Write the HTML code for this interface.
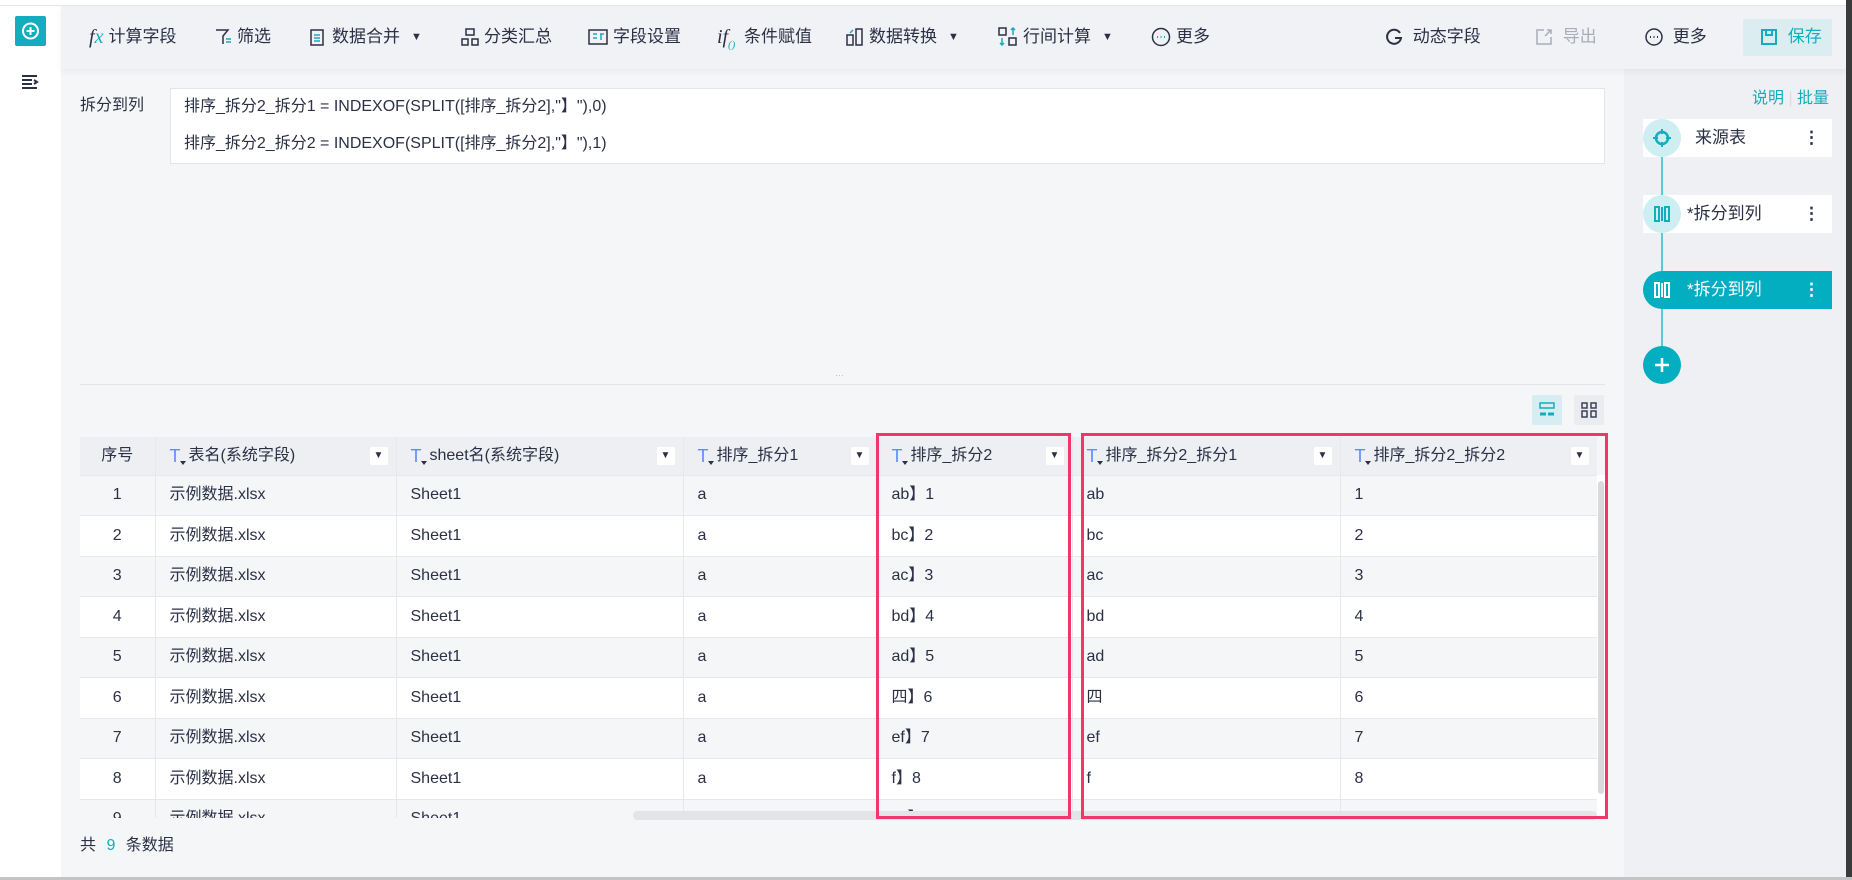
<!DOCTYPE html>
<html><head><meta charset="utf-8">
<style>
*{box-sizing:border-box;margin:0;padding:0}
body{width:1852px;height:880px;overflow:hidden;background:#fff;font-family:"Liberation Sans","Noto Sans CJK SC",sans-serif;color:#2b3045;position:relative}
.abs{position:absolute}
#side{left:0;top:5px;width:61px;height:872px;background:#fff;border-top:1px solid #e3e5ea}
#main{left:61px;top:5px;width:1563px;height:872px;background:#f5f6f8;border-top:1px solid #e3e5ea}
#rp{left:1624px;top:5px;width:222px;height:872px;background:#eff0f3;border-top:1px solid #e3e5ea}
#tb{left:61px;top:6px;width:1785px;height:63px;background:#f1f2f6;box-shadow:0 3px 6px rgba(0,0,0,.05)}
.ti{position:absolute;top:26px;height:22px;font-size:17px;line-height:22px;white-space:nowrap;color:#2b3045;display:flex;align-items:center;gap:5px}
.ti svg{flex:none}
.tri{font-size:11px;margin-left:6px}
#fbox{left:170px;top:88px;width:1435px;height:76px;background:#fff;border:1px solid #e3e5ea;font-size:16px;line-height:20px}
table{border-collapse:collapse;table-layout:fixed;font-size:16px;line-height:20px}
td,th{height:40.5px;border-right:1px solid #e6e8ee;border-bottom:1px solid #e6e8ee;padding:0 0 0 14px;text-align:left;font-weight:normal;white-space:nowrap;overflow:hidden;vertical-align:middle}
td span.v,th span.v{display:inline-block;vertical-align:middle;line-height:20px;height:20px}
th{height:38px;background:#edeff3;position:relative}
td:first-child,th:first-child{text-align:center;padding-left:0}
tr:nth-child(odd) td{background:#f5f6f8}
tr:nth-child(even) td{background:#fff}
.T{color:#5b8ff9;font-size:18px;position:relative;margin-right:8px;display:inline-block;vertical-align:middle;line-height:20px}
.T:after{content:"";position:absolute;left:10px;top:15px;border:3px solid transparent;border-top:4px solid #2b3045}
.dd{position:absolute;right:8px;top:10px;width:18px;height:18px;background:#fff;border-radius:2px;font-size:10px;text-align:center;line-height:18px}
.node{position:absolute;left:1643px;width:189px;height:38px;background:#fff;font-size:17px;line-height:38px}
.circ{position:absolute;left:0;top:0;width:38px;height:38px;border-radius:50%;background:#cfeef2}
.dots{position:absolute;right:12px;top:0;font-weight:bold}
</style></head><body>
<div class="abs" id="side"></div>
<div class="abs" id="main"></div>
<div class="abs" id="rp"></div>
<div class="abs" id="tb"></div>

<div class="abs" style="left:15px;top:16px;width:31px;height:30px;background:#13adbd;border-radius:2px"></div>
<svg class="abs" style="left:20px;top:21px" width="21" height="20"><circle cx="10.5" cy="10" r="7.5" fill="none" stroke="#fff" stroke-width="2"/><path d="M10.5 6v8M6.5 10h8" stroke="#fff" stroke-width="2"/></svg>
<svg class="abs" style="left:21px;top:74px" width="18" height="16"><path d="M1 2h15M1 6h10M1 10h10M1 14h15M13 6l3 2-3 2" stroke="#2b3045" stroke-width="2" fill="none"/></svg>

<div class="ti" style="left:89px"><span style="font-family:'Liberation Serif',serif;font-style:italic;font-size:20px">f<span style="color:#13adbd">x</span></span>计算字段</div>
<div class="ti" style="left:214px"><svg width="18" height="18"><path d="M2 2h12l-5 6v8" stroke="#2b3045" stroke-width="1.5" fill="none"/><path d="M12 11h5M12 14h5" stroke="#13adbd" stroke-width="1.5"/></svg>筛选</div>
<div class="ti" style="left:309px"><svg width="18" height="20"><rect x="2" y="3" width="12" height="15" fill="none" stroke="#2b3045" stroke-width="1.5"/><path d="M5 8h6M5 11h6M5 14h6" stroke="#13adbd" stroke-width="1.5"/></svg>数据合并<span class="tri">▼</span></div>
<div class="ti" style="left:461px"><svg width="18" height="18"><rect x="5" y="1" width="8" height="6" fill="none" stroke="#2b3045" stroke-width="1.5"/><rect x="1" y="11" width="6" height="6" fill="none" stroke="#2b3045" stroke-width="1.5"/><rect x="11" y="11" width="6" height="6" fill="none" stroke="#2b3045" stroke-width="1.5"/></svg>分类汇总</div>
<div class="ti" style="left:588px"><svg width="20" height="18"><rect x="1" y="2" width="18" height="14" fill="none" stroke="#2b3045" stroke-width="1.5"/><path d="M5 6h4M5 10h4M12 6h4M13 6v6" stroke="#13adbd" stroke-width="1.5"/></svg>字段设置</div>
<div class="ti" style="left:717px"><span style="font-family:'Liberation Serif',serif;font-style:italic;font-size:20px;position:relative;width:22px">if<span style="color:#13adbd;font-size:11px;position:absolute;left:11px;top:8px">()</span></span>条件赋值</div>
<div class="ti" style="left:846px"><svg width="18" height="20"><rect x="1" y="8" width="6" height="10" fill="none" stroke="#2b3045" stroke-width="1.5"/><rect x="10" y="2" width="6" height="16" fill="none" stroke="#2b3045" stroke-width="1.5"/><path d="M4 6l3-3" stroke="#13adbd" stroke-width="1.5"/></svg>数据转换<span class="tri">▼</span></div>
<div class="ti" style="left:998px"><svg width="20" height="20"><rect x="1" y="1" width="7" height="7" fill="none" stroke="#2b3045" stroke-width="1.5"/><rect x="11" y="11" width="7" height="7" fill="none" stroke="#2b3045" stroke-width="1.5"/><path d="M4 11v7M2 16l2 2 2-2M15 1v7M13 3l2-2 2 2" stroke="#13adbd" stroke-width="1.5" fill="none"/></svg>行间计算<span class="tri">▼</span></div>
<div class="ti" style="left:1151px"><svg width="20" height="20"><circle cx="10" cy="10" r="8.5" fill="none" stroke="#2b3045" stroke-width="1.5"/><path d="M6 10h1M9.5 10h1M13 10h1" stroke="#13adbd" stroke-width="2"/></svg>更多</div>
<div class="ti" style="left:1385px"><svg width="18" height="18"><path d="M15 5A7 7 0 1 0 16 10H10" stroke="#2b3045" stroke-width="2" fill="none"/></svg>&nbsp;动态字段</div>
<div class="ti" style="left:1535px;color:#a9adb8"><svg width="18" height="18"><path d="M9 2H2v14h14V9M10 8l6-6M12 2h4v4" stroke="#a9adb8" stroke-width="1.5" fill="none"/></svg>&nbsp;导出</div>
<div class="ti" style="left:1645px"><svg width="18" height="18"><circle cx="9" cy="9" r="8" fill="none" stroke="#2b3045" stroke-width="1.5"/><path d="M5 9h1M8.5 9h1M12 9h1" stroke="#2b3045" stroke-width="2"/></svg>&nbsp;更多</div>
<div class="abs" style="left:1743px;top:19px;width:89px;height:37px;background:#dcedf1;border-radius:2px"></div>
<div class="ti" style="left:1760px;color:#13adbd"><svg width="18" height="18"><path d="M2 2h14v14H2zM6 2v5h6V2" stroke="#13adbd" stroke-width="2" fill="none"/></svg>&nbsp;保存</div>

<div class="abs" style="left:80px;top:96px;font-size:16px;line-height:20px">拆分到列</div>
<div class="abs" id="fbox">
<div class="abs" style="left:13px;top:8px">排序_拆分2_拆分1 = INDEXOF(SPLIT([排序_拆分2],"】"),0)</div>
<div class="abs" style="left:13px;top:45px">排序_拆分2_拆分2 = INDEXOF(SPLIT([排序_拆分2],"】"),1)</div>
</div>
<div class="abs" style="left:80px;top:384px;width:1525px;height:1px;background:#e2e4e9"></div>
<div class="abs" style="left:835px;top:370px;font-size:9px;color:#bbb">···</div>

<div class="abs" style="left:1532px;top:395px;width:30px;height:30px;background:#d6eef2;border-radius:2px"></div>
<svg class="abs" style="left:1539px;top:402px" width="16" height="16"><rect x="1" y="1" width="14" height="5" fill="none" stroke="#13adbd" stroke-width="1.5"/><path d="M1 12h6M9 12h6" stroke="#13adbd" stroke-width="3"/></svg>
<div class="abs" style="left:1574px;top:395px;width:30px;height:30px;background:#ebecf0;border-radius:2px"></div>
<svg class="abs" style="left:1581px;top:402px" width="16" height="16"><rect x="1" y="1" width="5" height="5" fill="none" stroke="#3c4258" stroke-width="1.5"/><rect x="10" y="1" width="5" height="5" fill="none" stroke="#3c4258" stroke-width="1.5"/><rect x="1" y="9" width="5" height="6" fill="none" stroke="#3c4258" stroke-width="1.5"/><rect x="10" y="9" width="5" height="6" fill="none" stroke="#3c4258" stroke-width="1.5"/></svg>

<div class="abs" style="left:80px;top:437px;width:1517px;height:381px;overflow:hidden;background:#fff">
<table style="width:1517px">
<colgroup><col style="width:75px"><col style="width:241px"><col style="width:287px"><col style="width:194px"><col style="width:195px"><col style="width:268px"><col style="width:257px"></colgroup>
<thead><tr><th><span class="v">序号</span></th>
<th><span class="T">T</span><span class="v">表名(系统字段)</span><span class="dd">▼</span></th>
<th><span class="T">T</span><span class="v">sheet名(系统字段)</span><span class="dd">▼</span></th>
<th><span class="T">T</span><span class="v">排序_拆分1</span><span class="dd">▼</span></th>
<th><span class="T">T</span><span class="v">排序_拆分2</span><span class="dd">▼</span></th>
<th><span class="T">T</span><span class="v">排序_拆分2_拆分1</span><span class="dd">▼</span></th>
<th><span class="T">T</span><span class="v">排序_拆分2_拆分2</span><span class="dd">▼</span></th></tr></thead>
<tbody>
<tr><td><span class="v">1</span></td><td><span class="v">示例数据.xlsx</span></td><td><span class="v">Sheet1</span></td><td><span class="v">a</span></td><td><span class="v">ab】1</span></td><td><span class="v">ab</span></td><td><span class="v">1</span></td></tr>
<tr><td><span class="v">2</span></td><td><span class="v">示例数据.xlsx</span></td><td><span class="v">Sheet1</span></td><td><span class="v">a</span></td><td><span class="v">bc】2</span></td><td><span class="v">bc</span></td><td><span class="v">2</span></td></tr>
<tr><td><span class="v">3</span></td><td><span class="v">示例数据.xlsx</span></td><td><span class="v">Sheet1</span></td><td><span class="v">a</span></td><td><span class="v">ac】3</span></td><td><span class="v">ac</span></td><td><span class="v">3</span></td></tr>
<tr><td><span class="v">4</span></td><td><span class="v">示例数据.xlsx</span></td><td><span class="v">Sheet1</span></td><td><span class="v">a</span></td><td><span class="v">bd】4</span></td><td><span class="v">bd</span></td><td><span class="v">4</span></td></tr>
<tr><td><span class="v">5</span></td><td><span class="v">示例数据.xlsx</span></td><td><span class="v">Sheet1</span></td><td><span class="v">a</span></td><td><span class="v">ad】5</span></td><td><span class="v">ad</span></td><td><span class="v">5</span></td></tr>
<tr><td><span class="v">6</span></td><td><span class="v">示例数据.xlsx</span></td><td><span class="v">Sheet1</span></td><td><span class="v">a</span></td><td><span class="v">四】6</span></td><td><span class="v">四</span></td><td><span class="v">6</span></td></tr>
<tr><td><span class="v">7</span></td><td><span class="v">示例数据.xlsx</span></td><td><span class="v">Sheet1</span></td><td><span class="v">a</span></td><td><span class="v">ef】7</span></td><td><span class="v">ef</span></td><td><span class="v">7</span></td></tr>
<tr><td><span class="v">8</span></td><td><span class="v">示例数据.xlsx</span></td><td><span class="v">Sheet1</span></td><td><span class="v">a</span></td><td><span class="v">f】8</span></td><td><span class="v">f</span></td><td><span class="v">8</span></td></tr>
<tr><td><span class="v">9</span></td><td><span class="v">示例数据.xlsx</span></td><td><span class="v">Sheet1</span></td><td><span class="v">a</span></td><td><span class="v">xy】9</span></td><td><span class="v">xy</span></td><td><span class="v">9</span></td></tr>
</tbody></table>
</div>
<div class="abs" style="left:1597px;top:475px;width:8px;height:343px;background:#fff"></div>
<div class="abs" style="left:1598px;top:481px;width:6px;height:313px;background:#d9dadd;border-radius:3px"></div>
<div class="abs" style="left:633px;top:811px;width:964px;height:9px;background:#e3e4e7;border-radius:5px"></div>
<div class="abs" style="left:876px;top:433px;width:195px;height:386px;border:3px solid #f2356b"></div>
<div class="abs" style="left:1081px;top:433px;width:527px;height:386px;border:3px solid #f2356b"></div>

<div class="abs" style="left:80px;top:836px;font-size:16px;line-height:20px">共 <span style="color:#13adbd;margin:0 6px">9</span> 条数据</div>

<div class="abs" style="left:1752px;top:84px;font-size:16px;color:#13adbd">说明 <span style="color:#ddd">|</span> 批量</div>
<div class="abs" style="left:1661px;top:150px;width:2px;height:215px;background:#5ec8d3"></div>
<div class="node" style="top:119px"><div class="circ"></div><svg class="abs" style="left:9px;top:9px" width="20" height="20"><circle cx="10" cy="10" r="6" fill="none" stroke="#13adbd" stroke-width="2.5"/><path d="M10 1v5M10 14v5M1 10h5M14 10h5" stroke="#13adbd" stroke-width="2"/></svg><span style="position:absolute;left:52px">来源表</span><span class="dots">⋮</span></div>
<div class="node" style="top:195px"><div class="circ"></div><svg class="abs" style="left:11px;top:11px" width="16" height="16"><path d="M1 1h4v14H1zM11 1h4v14h-4zM8 1v14" stroke="#13adbd" stroke-width="2" fill="none"/></svg><span style="position:absolute;left:44px">*拆分到列</span><span class="dots">⋮</span></div>
<div class="node" style="top:271px;background:#03aec0;color:#fff;border-radius:19px 0 0 19px"><svg class="abs" style="left:11px;top:11px" width="16" height="16"><path d="M1 1h4v14H1zM11 1h4v14h-4zM8 1v14" stroke="#fff" stroke-width="2" fill="none"/></svg><span style="position:absolute;left:44px">*拆分到列</span><span class="dots">⋮</span></div>
<div class="abs" style="left:1643px;top:346px;width:38px;height:38px;border-radius:50%;background:#03aec0"></div>
<svg class="abs" style="left:1652px;top:355px" width="20" height="20"><path d="M10 3v14M3 10h14" stroke="#fff" stroke-width="2.5"/></svg>

<div class="abs" style="left:1846px;top:0;width:6px;height:880px;background:#3a3a3a"></div>
<div class="abs" style="left:0;top:877px;width:1852px;height:3px;background:#c4c4c4"></div>
</body></html>
